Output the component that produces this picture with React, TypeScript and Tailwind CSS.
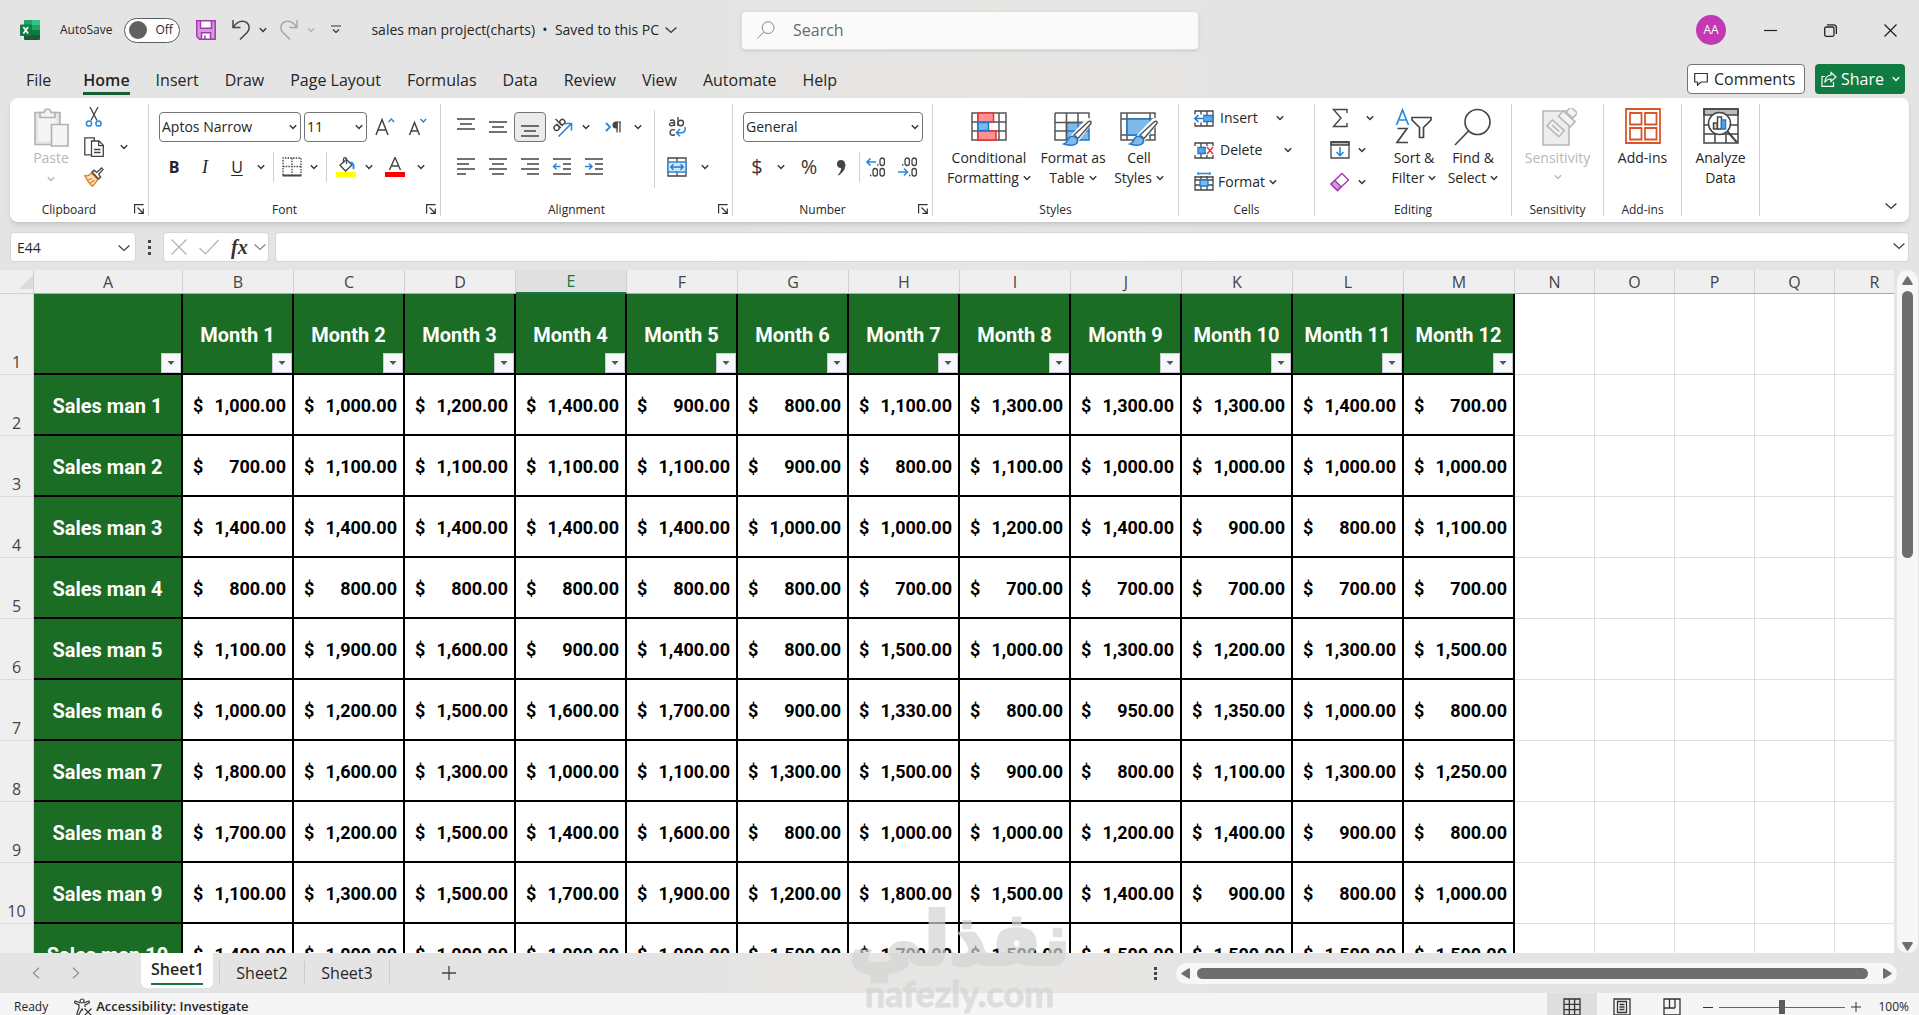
import type { ReactNode } from 'react';
import clsx from 'clsx';

const TABS = [
  'File',
  'Home',
  'Insert',
  'Draw',
  'Page Layout',
  'Formulas',
  'Data',
  'Review',
  'View',
  'Automate',
  'Help',
];

const MONTHS = Array.from({ length: 12 }, (_, i) => `Month ${i + 1}`);
const MONTH_LETTERS = 'BCDEFGHIJKLM'.split('');
const EMPTY_LETTERS = 'NOPQR'.split('');

const SALES = [
  [1000, 1000, 1200, 1400, 900, 800, 1100, 1300, 1300, 1300, 1400, 700],
  [700, 1100, 1100, 1100, 1100, 900, 800, 1100, 1000, 1000, 1000, 1000],
  [1400, 1400, 1400, 1400, 1400, 1000, 1000, 1200, 1400, 900, 800, 1100],
  [800, 800, 800, 800, 800, 800, 700, 700, 700, 700, 700, 700],
  [1100, 1900, 1600, 900, 1400, 800, 1500, 1000, 1300, 1200, 1300, 1500],
  [1000, 1200, 1500, 1600, 1700, 900, 1330, 800, 950, 1350, 1000, 800],
  [1800, 1600, 1300, 1000, 1100, 1300, 1500, 900, 800, 1100, 1300, 1250],
  [1700, 1200, 1500, 1400, 1600, 800, 1000, 1000, 1200, 1400, 900, 800],
  [1100, 1300, 1500, 1700, 1900, 1200, 1800, 1500, 1400, 900, 800, 1000],
  [1400, 1000, 1000, 1000, 1000, 1500, 1700, 1500, 1500, 1500, 1500, 1500],
];

const money = (value: number) =>
  value.toLocaleString('en-US', { minimumFractionDigits: 2 });

type IconProps = { className?: string };

function Chevron({ className = 'text-[#333]' }: IconProps) {
  return (
    <svg
      viewBox="0 0 8 6"
      className={clsx('h-1.5 w-2 shrink-0', className)}
      fill="none"
      stroke="currentColor"
      strokeWidth="1.4"
    >
      <path d="M.8 1.2 4 4.4l3.2-3.2" />
    </svg>
  );
}

function WideChevron({ className = 'text-[#333]' }: IconProps) {
  return (
    <svg
      viewBox="0 0 12 8"
      className={clsx('h-2 w-3 shrink-0', className)}
      fill="none"
      stroke="currentColor"
      strokeWidth="1.3"
    >
      <path d="m.6 1.4 5.4 5 5.4-5" />
    </svg>
  );
}

function ExcelIcon() {
  return (
    <svg viewBox="0 0 20 20" className="size-5">
      <path d="M5 0h8v5H4V1a1 1 0 0 1 1-1Z" fill="#21a366" />
      <path d="M12 0h7a1 1 0 0 1 1 1v4h-8Z" fill="#33c481" />
      <path d="M4 5h8v5H4Z" fill="#107c41" />
      <path d="M12 5h8v5h-8Z" fill="#21a366" />
      <path d="M4 10h8v10H5a1 1 0 0 1-1-1Z" fill="#185c37" />
      <path d="M12 10h8v5h-8Z" fill="#107c41" />
      <path d="M12 15h8v4a1 1 0 0 1-1 1h-7Z" fill="#185c37" />
      <rect y="4.500" width="11.500" height="11.500" rx="1" fill="#107c41" />
      <path d="m3.400 7 4.700 6.600M8.100 7l-4.700 6.600" stroke="#fff" strokeWidth="1.700" />
    </svg>
  );
}

function SaveIcon() {
  return (
    <svg viewBox="0 0 20 20" className="size-5" stroke="#a33bac" strokeWidth="1.500">
      <path d="M.8.8h18.400v18.400H3.500L.8 16.500Z" fill="#d49bdc" />
      <path d="M4.500.8h11v7.400h-11Z" fill="#fff" />
      <path d="M5.500 19.200v-6.400h9v6.400Z" fill="#fff" />
      <path d="M9 19v-3.500" />
    </svg>
  );
}

function UndoIcon({ className }: IconProps) {
  return (
    <svg
      viewBox="0 0 20 22"
      className={clsx('h-[22px] w-5', className)}
      fill="none"
      stroke="currentColor"
      strokeWidth="1.500"
    >
      <path d="M2 1v7.500h7.500M2 8.500C5 4 8 2 11.500 2.200c6.500.4 8.500 6.800 4.600 11.300L9 20.500" />
    </svg>
  );
}

function PasteIcon() {
  return (
    <svg viewBox="0 0 36 40" className="h-10 w-9" stroke="#b3b3b3" strokeWidth="1.700">
      <path d="M2 4.500h25v32H2Z" fill="#e6e6e6" />
      <path d="M5.500 8h18v25.500h-18Z" fill="#f5f5f5" stroke="none" />
      <path d="M7 9.500V4.500h4C11.500 2 13 1 14.500 1S17.500 2 18 4.500h4v5Z" fill="#f3f3f3" />
      <path d="M18.500 16.500H35v21.500H18.500Z" fill="#f5f5f5" />
    </svg>
  );
}

function CutIcon() {
  return (
    <svg viewBox="0 0 20 20" className="size-5" fill="none" strokeWidth="1.300">
      <path d="m6 0 7 13.500M14 0 7 13.500" stroke="#444" />
      <circle cx="5" cy="16.500" r="2.600" stroke="#2b88d8" strokeWidth="1.500" />
      <circle cx="14.500" cy="16.500" r="2.600" stroke="#2b88d8" strokeWidth="1.500" />
    </svg>
  );
}

function CopyIcon() {
  return (
    <svg viewBox="0 0 20 20" className="size-5" fill="#fff" stroke="#444" strokeWidth="1.300">
      <path d="M.8.8h9.500v17H.8Z" />
      <path d="M7.500 4h7.500l4.300 4.300v11H7.500Z" />
      <path d="M14.700 4v4.600h4.500M10 12.500h6.500M10 15.500h6.500" fill="none" />
    </svg>
  );
}

function PainterIcon() {
  return (
    <svg viewBox="0 0 20 20" className="size-5" strokeWidth="1.300">
      <path d="M.8 8.500c3.500 1 5-.2 6.500-2.500l6.500 6.500c-1.500 2-2.800 4-5.300 6.700C5.500 17.500 3 13 .8 8.500Z" fill="#fbe3c6" stroke="#e07a10" />
      <path d="m4 13 4-1.500M6 16.500l4.500-3.500" stroke="#e07a10" />
      <path d="m8 5 2-1.800 2.800 2.300L17.500 1 19 2.500l-4.300 4.800 2 2.700-2.200 2Z" fill="#fff" stroke="#444" />
    </svg>
  );
}

function BordersIcon() {
  return (
    <svg viewBox="0 0 20 20" className="size-5" fill="none" stroke="#444" strokeWidth="1.300">
      <path d="M1 18V1h18v17M10 1v17M1 9.500h18" strokeDasharray="1.500 1.200" />
      <path d="M.5 18.500h19" strokeWidth="2" />
    </svg>
  );
}

function FillIcon() {
  return (
    <svg viewBox="0 0 20 20" className="size-5" fill="none" strokeWidth="1.300">
      <path d="M9.500 1.500 16 8l-6.500 6L4 8.300l5.500-5" stroke="#444" fill="#fff" />
      <path d="M7.500 6V2.200c0-2 3-2 3 0V7" stroke="#444" />
      <path d="M14 5.500c3.200 0 4 2.500 3.400 6.500" stroke="#2b88d8" strokeWidth="2" />
      <path d="M0 15h20v5H0Z" fill="#ff0" />
    </svg>
  );
}

function FontColorIcon() {
  return (
    <svg viewBox="0 0 20 20" className="size-5" fill="none">
      <path d="M4.500 13 10 .5 15.500 13M6.300 9h7.400" stroke="#444" strokeWidth="1.400" />
      <path d="M0 15h20v5H0Z" fill="#f00" />
    </svg>
  );
}

function FontSizeIcon({ grow }: { grow?: boolean }) {
  return (
    <svg viewBox="0 0 20 20" className="size-5" fill="none" strokeWidth="1.500">
      <path
        d={grow ? 'M1 18 7 2.500 13 18M3 13h8' : 'M1.500 18 6.500 5.500 11.500 18M3.300 14h6.400'}
        stroke="#444"
      />
      <path d={grow ? 'm13.500 5 2.800-3 2.800 3' : 'm12.500 2 2.800 3 2.800-3'} stroke="#2b88d8" />
    </svg>
  );
}

const LINE_ICONS = {
  top: 'M1 2h18M4 7h12M1 12h18',
  middle: 'M1 5h18M4 10h12M1 15h18',
  bottom: 'M1 9h18M4 14h12M1 19h18',
  left: 'M1 2h18M1 7h12M1 12h18M1 17h9',
  center: 'M1 2h18M4 7h12M1 12h18M4 17h12',
  right: 'M1 2h18M7 7h12M1 12h18M7 17h12',
};

function LinesIcon({ kind }: { kind: keyof typeof LINE_ICONS }) {
  return (
    <svg viewBox="0 0 20 20" className="size-5" stroke="#444" strokeWidth="1.500">
      <path d={LINE_ICONS[kind]} />
    </svg>
  );
}

function IndentIcon({ more }: { more?: boolean }) {
  return (
    <svg viewBox="0 0 20 20" className="size-5" fill="none" strokeWidth="1.500">
      <path d="M1 2h18M11 7h8M11 12h8M1 17h18" stroke="#444" />
      <path d={more ? 'M1 9.500h7M5 6.500l3 3-3 3' : 'M8.500 9.500h-7M4.500 6.500l-3 3 3 3'} stroke="#2b88d8" />
    </svg>
  );
}

function OrientationIcon() {
  return (
    <svg viewBox="0 0 22 22" className="size-[22px]" fill="none" strokeWidth="1.400">
      <g stroke="#444" transform="rotate(-45 7 9)">
        <circle cx="4" cy="10" r="2.600" />
        <path d="M6.800 7v6.200M9.500 3v10" />
        <circle cx="12.200" cy="10" r="2.600" />
      </g>
      <path d="M7.500 20.500 20 8M13.500 7.500h7v7" stroke="#2b88d8" strokeWidth="1.600" />
    </svg>
  );
}

function ParagraphIcon() {
  return (
    <svg viewBox="0 0 20 20" className="size-5" fill="none">
      <path d="m2 6 4 4-4 4" stroke="#2b88d8" strokeWidth="1.800" />
      <path d="M17 5h-5a2.800 2.800 0 0 0 0 6h1V5" fill="#444" stroke="#444" strokeWidth="1.200" />
      <path d="M13 5v10.500M16 5v10.500" stroke="#444" strokeWidth="1.300" />
    </svg>
  );
}

function WrapIcon() {
  return (
    <svg viewBox="0 0 20 20" className="size-5" fill="none" strokeWidth="1.400">
      <g stroke="#444">
        <path d="M3 3.600c1.500-1 4.500-1 4.500 1.300V9M7.500 5.500C4 5.500 2.500 6 2.500 7.300 2.500 9.500 6.500 9 7.500 7" />
        <path d="M11 0v9" />
        <circle cx="13.800" cy="6" r="2.700" />
        <path d="M8 13.200c-2-1.200-5-.5-5 2.300s3 3.300 5 2.200" />
      </g>
      <path d="M18 10c.8 3.500-.5 5.800-4 5.800h-4M13 12l-3.500 3.800L13 19.300" stroke="#2b88d8" strokeWidth="1.600" />
    </svg>
  );
}

function MergeIcon() {
  return (
    <svg viewBox="0 0 20 20" className="size-5" strokeWidth="1.300" fill="none">
      <path d="M1 1h18v18H1ZM10 1v4M10 15v4" stroke="#444" />
      <path d="M1 5h18v10H1Z" fill="#cfe6f8" stroke="#2b88d8" />
      <path d="M4 10h12M6.500 7.200 3.700 10l2.800 2.800M13.500 7.200l2.800 2.800-2.800 2.800" stroke="#1f78c8" />
    </svg>
  );
}

function DecimalIcon({ fewer }: { fewer?: boolean }) {
  return (
    <svg viewBox="0 0 20 20" className="size-5" fill="none" strokeWidth="1.300">
      {fewer ? (
        <>
          <path d="M0 15h9M6 11.500 9.500 15 6 18.500" stroke="#2b88d8" strokeWidth="1.600" />
          <rect x="7" y="1" width="4.400" height="7.500" rx="2.200" stroke="#444" />
          <rect x="14" y="1" width="4.400" height="7.500" rx="2.200" stroke="#444" />
          <rect x="14" y="11.500" width="4.400" height="7.500" rx="2.200" stroke="#444" />
          <path d="M4 8h1.400M11 18.500h1.400" stroke="#444" />
        </>
      ) : (
        <>
          <path d="M10 5H1M4.500 1.500 1 5l3.500 3.500" stroke="#2b88d8" strokeWidth="1.600" />
          <rect x="14" y="1" width="4.400" height="7.500" rx="2.200" stroke="#444" />
          <rect x="7" y="11.500" width="4.400" height="7.500" rx="2.200" stroke="#444" />
          <rect x="14" y="11.500" width="4.400" height="7.500" rx="2.200" stroke="#444" />
          <path d="M11 8h1.400M4 18.500h1.400" stroke="#444" />
        </>
      )}
    </svg>
  );
}

function ConditionalIcon() {
  return (
    <svg viewBox="0 0 36 36" className="size-9" fill="none" strokeWidth="1.500">
      <path d="M1 5h34v27H1ZM1 14h34M1 23h34M7 5v27M28 5v27" stroke="#555" />
      <path d="M7 5h15.500v9H7ZM7 23h18v9H7Z" fill="#ff8f95" stroke="#e8302f" />
      <path d="M7 14.500h10.500v8H7Z" fill="#7fb8ea" stroke="#1f78c8" />
    </svg>
  );
}

function Brush() {
  return (
    <>
      <path d="M17 30 33 13c2-2 4.500-.5 3 2L22 33Z" fill="#fff" stroke="#fff" strokeWidth="4" />
      <path d="M20 27 34 14c2-1.800 4-.3 2.500 2L24 30.500Z" fill="#fff" stroke="#555" strokeWidth="1.500" />
      <path d="M10 36c3-1 3-3 4.500-5.500 2.500-3.500 8-2.500 9 1.500.8 4-4 7-13.500 4Z" fill="#7fb8ea" stroke="#1f78c8" strokeWidth="1.500" />
    </>
  );
}

function FormatTableIcon() {
  return (
    <svg viewBox="0 0 38 38" className="size-[38px]" fill="none" strokeWidth="1.500">
      <path d="M12.500 14.500H35V32H12.500Z" fill="#7fb8ea" stroke="#1f78c8" />
      <path d="M1 5h34v9.500H1v17.500h11M1 5v27M12.500 5v27M24 5v9.500M1 23h11.500" stroke="#555" />
      <path d="M24 14.500v8M13 23h22" stroke="#1f78c8" />
      <Brush />
    </svg>
  );
}

function CellStylesIcon() {
  return (
    <svg viewBox="0 0 38 38" className="size-[38px]" fill="none" strokeWidth="1.500">
      <path d="M1 5h34v27H1ZM7 5v27M30 5v27M1 11h34M1 27h34" stroke="#555" />
      <path d="M7 11h23v16H7Z" fill="#7fb8ea" stroke="#1f78c8" />
      <Brush />
    </svg>
  );
}

function CellsIcon({ kind }: { kind: 'insert' | 'delete' | 'format' }) {
  return (
    <svg viewBox="0 0 20 20" className="size-5" fill="none" strokeWidth="1.300">
      <path d="M1 3h18v15H1ZM7 3v15M13 3v15M1 8h18M1 13h18" stroke="#444" />
      {kind === 'insert' && (
        <>
          <path d="M8 7.500h11v6H8Z" fill="#5ba8e8" stroke="#1f78c8" />
          <path d="M0 6.500h9v8H0Z" fill="#fff" />
          <path d="M1 10.500h9M4.500 7 1 10.500 4.500 14" stroke="#1f78c8" strokeWidth="1.600" />
        </>
      )}
      {kind === 'delete' && (
        <>
          <path d="M0 6h4v9H0Z M12 6h8v9h-8Z" fill="#fff" />
          <path d="M4 7.500h7v6H4Z" fill="#5ba8e8" stroke="#1f78c8" />
          <path d="m13 7 6 7M19 7l-6 7" stroke="#e03131" strokeWidth="1.400" />
        </>
      )}
      {kind === 'format' && (
        <>
          <path d="M0 0h20v4H0Z" fill="#fff" />
          <path d="M4 1.500h12M4 0v3M16 0v3" stroke="#2b88d8" />
          <path d="M1 5h18" stroke="#444" />
          <path d="M6 8h8v6H6Z" fill="#7fb8ea" stroke="#1f78c8" />
        </>
      )}
    </svg>
  );
}

function SortIcon() {
  return (
    <svg viewBox="0 0 38 38" className="size-[38px]" fill="none" strokeWidth="1.700">
      <path d="M1.500 17 7.500 2l6 15M3.500 12h8" stroke="#2b88d8" />
      <path d="M2.500 20.500h9.500l-10 14h11" stroke="#444" />
      <path d="M17 9.500h19v2.500l-7.500 7.500v10h-4v-10L17 12Z" stroke="#444" />
    </svg>
  );
}

function FindIcon({ className }: IconProps) {
  return (
    <svg viewBox="0 0 38 38" className={className} fill="none" stroke="currentColor" strokeWidth="1.600">
      <circle cx="23.500" cy="14" r="12.500" />
      <path d="M14.500 23 1 37" />
    </svg>
  );
}

function SensitivityIcon() {
  return (
    <svg viewBox="0 0 38 38" className="size-[38px]" stroke="#b8b8b8" strokeWidth="1.600">
      <path d="M4 3h26v34H4Z" fill="#ededed" />
      <g transform="rotate(42 20 18)" fill="#f3f3f3">
        <path d="M13 1h9v7h-9Z" transform="translate(3 -5)" />
        <path d="M13 4h16v7H13Z" />
        <path d="M13 15h16v8H13Z" transform="translate(-2 3)" />
        <path d="M14 22h10" />
      </g>
    </svg>
  );
}

function AddInsIcon() {
  return (
    <svg viewBox="0 0 36 36" className="size-9" fill="none" stroke="#d9562b" strokeWidth="1.800">
      <path d="M1 1h34v34H1ZM5 5h11.500v11.500H5ZM20 5h11.500v11.500H20ZM5 20h11.500v11.500H5ZM20 20h11.500v11.500H20Z" />
    </svg>
  );
}

function AnalyzeIcon() {
  return (
    <svg viewBox="0 0 36 36" className="size-9" fill="none" stroke="#444" strokeWidth="1.500">
      <path d="M1 1h34v6H1Z" fill="#bdbdbd" />
      <path d="M1 1h34v34H1ZM1 17h34M1 26h34M12 26v9M23 26v9" />
      <circle cx="16.500" cy="15.500" r="11" fill="#fff" />
      <path d="M24.500 23.500 34 34.500" strokeWidth="2" />
      <path d="M10.500 15h4v6h-4Z" fill="#d0d0d0" />
      <path d="M14.500 9h4v12h-4Z" fill="#fff" />
      <path d="M18.500 12h4v9h-4Z" fill="#5ba8e8" stroke="#1f78c8" />
    </svg>
  );
}

function Launcher({ label }: { label: string }) {
  return (
    <button aria-label={label} className="absolute right-1 bottom-2">
      <svg viewBox="0 0 10 10" className="size-2.5" fill="none" stroke="#333" strokeWidth="1.200">
        <path d="M.6 9.500V.6h9M3.500 3.500l5.500 5.500M9.300 4.500v4.800H4.500" />
      </svg>
    </button>
  );
}

type GroupProps = {
  label?: string;
  className: string;
  launcher?: boolean;
  children: ReactNode;
};

function Group({ label, className, launcher, children }: GroupProps) {
  return (
    <section
      aria-label={label}
      className={clsx('relative flex shrink-0 flex-col', className)}
    >
      <div className="flex flex-1">{children}</div>
      <h2
        className={clsx(
          'mb-0.5 h-5 text-center text-xs leading-5',
          launcher && 'pr-5',
        )}
      >
        {label}
      </h2>
      {launcher && <Launcher label={`${label} settings`} />}
    </section>
  );
}

function GroupLine() {
  return <div className="my-1.5 w-px shrink-0 bg-[#d1d1d1]" />;
}

type ToolProps = {
  label: string;
  className?: string;
  disabled?: boolean;
  children: ReactNode;
};

function Tool({ label, className = 'w-8', disabled, children }: ToolProps) {
  return (
    <button
      aria-label={label}
      title={label}
      disabled={disabled}
      className={clsx(
        'flex h-[30px] shrink-0 items-center justify-center rounded hover:bg-black/5',
        className,
      )}
    >
      {children}
    </button>
  );
}

function More({ label }: { label: string }) {
  return (
    <Tool label={label} className="w-4">
      <Chevron />
    </Tool>
  );
}

type BigToolProps = {
  icon: ReactNode;
  lines: string[];
  className: string;
  arrow?: boolean;
  disabled?: boolean;
};

function BigTool({ icon, lines, className, arrow, disabled }: BigToolProps) {
  return (
    <button
      disabled={disabled}
      className={clsx(
        'mt-2 flex shrink-0 flex-col items-center self-start text-sm leading-5 whitespace-nowrap',
        disabled && 'text-[#b8b8b8]',
        className,
      )}
    >
      <span className="flex h-[42px] items-start justify-center pt-0.5">{icon}</span>
      {lines.map((line, i) => (
        <span key={line} className="flex h-5 items-center gap-1">
          {line}
          {arrow && i === lines.length - 1 && i > 0 && <Chevron />}
        </span>
      ))}
      {arrow && lines.length === 1 && (
        <Chevron className="mt-1.5 text-[#b8b8b8]" />
      )}
    </button>
  );
}

type PickerProps = { label: string; value: string; className: string };

function Picker({ label, value, className }: PickerProps) {
  return (
    <div className={clsx('relative', className)}>
      <select
        aria-label={label}
        defaultValue={value}
        className="h-[30px] w-full appearance-none rounded border border-[#757575] bg-white pl-0.5 text-sm"
      >
        <option>{value}</option>
      </select>
      <Chevron className="pointer-events-none absolute top-3 right-1 text-[#333]" />
    </div>
  );
}

function TitleBar() {
  return (
    <header className="flex h-[60px] items-start">
      <div className="flex h-[60px] w-[741px] shrink-0 items-center pl-5">
        <ExcelIcon />
        <span className="ml-5 text-xs">AutoSave</span>
        <button
          role="switch"
          aria-checked="false"
          aria-label="AutoSave"
          className="ml-3 flex h-[25px] w-14 items-center gap-2 rounded-full border border-[#5c5c5c] bg-white pl-1 text-xs"
        >
          <span className="size-[18px] rounded-full bg-[#616161]" />
          Off
        </button>
        <button aria-label="Save" className="ml-4">
          <SaveIcon />
        </button>
        <button aria-label="Undo" className="ml-[15px] text-[#444]">
          <UndoIcon />
        </button>
        <button aria-label="Undo history" className="ml-2">
          <Chevron />
        </button>
        <button aria-label="Redo" disabled className="ml-3 -scale-x-100 text-[#a6a6a6]">
          <UndoIcon />
        </button>
        <button aria-label="Redo history" disabled className="ml-2">
          <Chevron className="text-[#b5b5b5]" />
        </button>
        <button aria-label="Customize toolbar" className="ml-4">
          <svg viewBox="0 0 10 10" className="size-2.5" fill="none" stroke="#333" strokeWidth="1.200">
            <path d="M0 1h10M2 4.500l3 3 3-3" />
          </svg>
        </button>
        <button className="ml-[30px] flex items-center gap-1.5 text-sm">
          sales man project(charts) &nbsp;•&nbsp; Saved to this PC
          <WideChevron />
        </button>
      </div>
      <label className="mt-[11px] flex h-[39px] w-[458px] items-center gap-[18px] rounded border border-[#e0e0e0] bg-[#fafafa] pb-0.5 pl-[15px] shadow-sm">
        <FindIcon className="size-[18px] text-[#666]" />
        <input
          placeholder="Search"
          aria-label="Search"
          className="flex-1 bg-transparent text-base outline-none placeholder:text-[#6a6a6a]"
        />
      </label>
      <div className="flex h-[60px] flex-1 items-center justify-end pr-[22px]">
        <button
          aria-label="Account"
          className="mr-[38px] size-[30px] rounded-full bg-[#c239b3] text-xs text-white"
        >
          AA
        </button>
        <button aria-label="Minimize" className="mr-[47px]">
          <svg viewBox="0 0 13 13" className="size-[13px]" stroke="#222" strokeWidth="1.200">
            <path d="M0 6.500h13" />
          </svg>
        </button>
        <button aria-label="Restore" className="mr-[47px]">
          <svg viewBox="0 0 13 13" className="size-[13px]" fill="none" stroke="#222" strokeWidth="1.300">
            <rect x=".7" y="3" width="9.300" height="9.300" rx="1.500" />
            <path d="M3 .8h6.500a3 3 0 0 1 2.900 2.900V10" />
          </svg>
        </button>
        <button aria-label="Close">
          <svg viewBox="0 0 13 13" className="size-[13px]" stroke="#222" strokeWidth="1.300">
            <path d="m.5.5 12 12M12.500.5l-12 12" />
          </svg>
        </button>
      </div>
    </header>
  );
}

function TabBar() {
  return (
    <div className="flex h-[38px] items-start pl-[26px]">
      <nav className="flex flex-1 gap-[26px] text-base">
        {TABS.map((tab) => (
          <a
            key={tab}
            href="#"
            className={clsx(
              'block h-[35px] pt-2 leading-6 whitespace-nowrap',
              tab === 'Home' && 'ml-1.5 border-b-3 border-[#185c37] font-semibold',
            )}
          >
            {tab}
          </a>
        ))}
      </nav>
      <button className="mt-1 mr-2.5 flex h-[30px] w-[118px] items-center gap-1.5 rounded border border-[#757575] bg-white pl-1.5 text-base">
        <svg viewBox="0 0 14 14" className="size-3.5 shrink-0" fill="none" stroke="#333" strokeWidth="1.200">
          <path d="M.7 1.500h12.600v8.500H7l-3.500 3.300V10H.7Z" />
        </svg>
        Comments
      </button>
      <button className="mt-1 mr-3.5 flex h-[30px] w-[90px] items-center gap-1 rounded bg-[#107c41] pl-1.5 text-base text-white">
        <svg viewBox="0 0 16 16" className="size-4 shrink-0" fill="none" stroke="#fff" strokeWidth="1.200">
          <path d="M4 5.500H1v9.800h11.500V11" />
          <path d="M10 1.500 15 6l-5 4.500V8C7 8 5 9 3.800 11.500 4 7 6.500 4.500 10 4Z" />
        </svg>
        Share
        <Chevron className="ml-1 text-white" />
      </button>
    </div>
  );
}

function Ribbon() {
  return (
    <div className="mx-2.5 flex h-[124px] shrink-0 overflow-hidden rounded-lg bg-white shadow-md">
      <Group label="Clipboard" className="w-[138px]" launcher>
        <button disabled className="mt-2.5 flex w-[62px] shrink-0 flex-col items-center self-start pl-5 text-sm leading-5 text-[#b8b8b8]">
          <PasteIcon />
          <span>Paste</span>
          <Chevron className="mt-2 text-[#b8b8b8]" />
        </button>
        <div className="mt-1 ml-1.5 flex flex-col">
          <Tool label="Cut" className="h-8 w-8">
            <CutIcon />
          </Tool>
          <div className="flex">
            <Tool label="Copy" className="h-8 w-8">
              <CopyIcon />
            </Tool>
            <Tool label="Copy options" className="h-8 w-7">
              <Chevron />
            </Tool>
          </div>
          <Tool label="Format Painter" className="h-8 w-8">
            <PainterIcon />
          </Tool>
        </div>
      </Group>
      <GroupLine />

      <Group label="Font" className="w-[291px]" launcher>
        <div className="mt-3.5 ml-2.5 flex flex-col gap-2.5">
          <div className="flex gap-[3px]">
            <Picker label="Font" value="Aptos Narrow" className="w-[142px]" />
            <Picker label="Font size" value="11" className="w-[63px]" />
            <Tool label="Increase font size" className="w-[30px]">
              <FontSizeIcon grow />
            </Tool>
            <Tool label="Decrease font size" className="w-[30px]">
              <FontSizeIcon />
            </Tool>
          </div>
          <div className="flex">
            <Tool label="Bold" className="w-[30px]">
              <b className="text-base">B</b>
            </Tool>
            <Tool label="Italic">
              <i className="font-['Liberation_Serif',serif] text-lg">I</i>
            </Tool>
            <Tool label="Underline">
              <span className="text-base underline underline-offset-2">U</span>
            </Tool>
            <More label="Underline style" />
            <div className="mx-1 w-px bg-[#d1d1d1]" />
            <Tool label="Borders" className="w-7">
              <BordersIcon />
            </Tool>
            <More label="Border style" />
            <div className="mx-1 w-px bg-[#d1d1d1]" />
            <Tool label="Fill color" className="w-[30px]">
              <FillIcon />
            </Tool>
            <More label="Pick fill color" />
            <Tool label="Font color" className="w-9">
              <FontColorIcon />
            </Tool>
            <More label="Pick font color" />
          </div>
        </div>
      </Group>
      <GroupLine />

      <Group label="Alignment" className="w-[291px]" launcher>
        <div className="mt-3.5 ml-[9px] flex flex-col gap-2.5">
          <div className="flex">
            <Tool label="Top align">
              <LinesIcon kind="top" />
            </Tool>
            <Tool label="Middle align">
              <LinesIcon kind="middle" />
            </Tool>
            <Tool label="Bottom align" className="w-8 border border-[#757575] bg-[#ebebeb]">
              <LinesIcon kind="bottom" />
            </Tool>
            <Tool label="Orientation">
              <OrientationIcon />
            </Tool>
            <More label="Orientation options" />
            <Tool label="Text direction" className="ml-1 w-8">
              <ParagraphIcon />
            </Tool>
            <More label="Text direction options" />
          </div>
          <div className="flex">
            <Tool label="Align left">
              <LinesIcon kind="left" />
            </Tool>
            <Tool label="Center">
              <LinesIcon kind="center" />
            </Tool>
            <Tool label="Align right">
              <LinesIcon kind="right" />
            </Tool>
            <Tool label="Decrease indent">
              <IndentIcon />
            </Tool>
            <Tool label="Increase indent">
              <IndentIcon more />
            </Tool>
          </div>
        </div>
        <div className="mt-3 mr-1.5 ml-2 h-[78px] w-px bg-[#d1d1d1]" />
        <div className="mt-3.5 flex flex-col gap-2.5">
          <Tool label="Wrap text">
            <WrapIcon />
          </Tool>
          <div className="flex">
            <Tool label="Merge and center">
              <MergeIcon />
            </Tool>
            <Tool label="Merge options" className="w-6">
              <Chevron />
            </Tool>
          </div>
        </div>
      </Group>
      <GroupLine />

      <Group label="Number" className="w-[199px]" launcher>
        <div className="mt-3.5 ml-2.5 flex flex-col gap-2.5">
          <Picker label="Number format" value="General" className="w-[180px]" />
          <div className="flex">
            <Tool label="Currency" className="w-7">
              <span className="text-xl text-[#333]">$</span>
            </Tool>
            <Tool label="Currency options" className="w-5">
              <Chevron />
            </Tool>
            <Tool label="Percent" className="ml-0.5 w-8">
              <span className="text-xl text-[#333]">%</span>
            </Tool>
            <Tool label="Comma style">
              <svg viewBox="0 0 20 20" className="size-5">
                <circle cx="10" cy="7" r="4" fill="#444" />
                <path d="M14 7c0 5-2 8-6.500 11C10.500 14 11 12 10 9Z" fill="#444" stroke="#444" />
              </svg>
            </Tool>
            <div className="ml-0.5 w-px bg-[#d1d1d1]" />
            <Tool label="Increase decimal">
              <DecimalIcon />
            </Tool>
            <Tool label="Decrease decimal">
              <DecimalIcon fewer />
            </Tool>
          </div>
        </div>
      </Group>
      <GroupLine />

      <Group label="Styles" className="w-[245px]">
        <BigTool icon={<ConditionalIcon />} lines={['Conditional', 'Formatting']} className="ml-2.5 w-[92px]" arrow />
        <BigTool icon={<FormatTableIcon />} lines={['Format as', 'Table']} className="w-[76px]" arrow />
        <BigTool icon={<CellStylesIcon />} lines={['Cell', 'Styles']} className="w-14" arrow />
      </Group>
      <GroupLine />

      <Group label="Cells" className="w-[135px]">
        <div className="mt-1 ml-[15px] flex flex-col text-sm">
          <button className="flex h-8 items-center gap-1.5">
            <CellsIcon kind="insert" />
            Insert
            <Chevron className="ml-3 text-[#333]" />
          </button>
          <button className="flex h-8 items-center gap-1.5">
            <CellsIcon kind="delete" />
            Delete
            <Chevron className="ml-4 text-[#333]" />
          </button>
          <button className="flex h-8 items-center gap-1">
            <CellsIcon kind="format" />
            Format
            <Chevron />
          </button>
        </div>
      </Group>
      <GroupLine />

      <Group label="Editing" className="w-[196px]">
        <div className="mt-1 ml-[15px] flex flex-col">
          <div className="flex h-8 items-center">
            <Tool label="AutoSum" className="w-5">
              <svg viewBox="0 0 20 20" className="size-5" fill="none" stroke="#444" strokeWidth="1.400">
                <path d="M17 5V1.500H3.500L11 10l-7.500 8.500H17V15" />
              </svg>
            </Tool>
            <Tool label="AutoSum options" className="ml-2.5 w-5">
              <Chevron />
            </Tool>
          </div>
          <div className="flex h-8 items-center">
            <Tool label="Fill" className="w-5">
              <svg viewBox="0 0 20 20" className="size-5" fill="none" stroke="#444" strokeWidth="1.300">
                <path d="M1 2h18v3H1Z" fill="#bdbdbd" />
                <path d="M1 2h18v16H1Z" />
                <path d="M10 7v8.500M6.500 12l3.500 3.500 3.500-3.500" stroke="#2b88d8" strokeWidth="1.600" />
              </svg>
            </Tool>
            <Tool label="Fill options" className="ml-0.5 w-5">
              <Chevron />
            </Tool>
          </div>
          <div className="flex h-8 items-center">
            <Tool label="Clear" className="w-5">
              <svg viewBox="0 0 20 20" className="size-5" fill="#fff" stroke="#a33bac" strokeWidth="1.400">
                <path d="M12 1.500 18.500 8 7.500 18.500 1 12Z" />
                <path d="m5 8.500 6 6.200-3.500 3.800L1 12Z" fill="#d49bdc" />
              </svg>
            </Tool>
            <Tool label="Clear options" className="ml-0.5 w-5">
              <Chevron />
            </Tool>
          </div>
        </div>
        <BigTool icon={<SortIcon />} lines={['Sort &', 'Filter']} className="ml-1 w-[60px]" arrow />
        <BigTool icon={<FindIcon className="size-[38px] text-[#444]" />} lines={['Find &', 'Select']} className="w-[58px]" arrow />
      </Group>
      <GroupLine />

      <Group label="Sensitivity" className="w-[91px]">
        <BigTool icon={<SensitivityIcon />} lines={['Sensitivity']} className="w-full" arrow disabled />
      </Group>
      <GroupLine />
      <Group label="Add-ins" className="w-[77px]">
        <BigTool icon={<AddInsIcon />} lines={['Add-ins']} className="w-full" />
      </Group>
      <GroupLine />
      <Group className="w-[77px]">
        <BigTool icon={<AnalyzeIcon />} lines={['Analyze', 'Data']} className="w-full" />
      </Group>
      <GroupLine />

      <div className="flex flex-1 items-end justify-end pr-3 pb-3">
        <button aria-label="Collapse the ribbon">
          <WideChevron />
        </button>
      </div>
    </div>
  );
}

function FormulaBar() {
  return (
    <div className="flex h-12 shrink-0 items-center px-2.5 pt-0.5">
      <div className="relative w-[126px]">
        <input
          aria-label="Name box"
          defaultValue="E44"
          className="h-[30px] w-full rounded border border-[#d6d6d6] bg-white pl-1.5 text-sm"
        />
        <WideChevron className="pointer-events-none absolute top-3 right-1.5 text-[#444]" />
      </div>
      <div className="mx-3 flex flex-col gap-[3px]">
        <span className="size-[3px] bg-[#444]" />
        <span className="size-[3px] bg-[#444]" />
        <span className="size-[3px] bg-[#444]" />
      </div>
      <div className="flex h-[30px] w-[106px] items-center rounded border border-[#d6d6d6] bg-white pl-[7px]">
        <button aria-label="Cancel" disabled>
          <svg viewBox="0 0 16 16" className="size-4" stroke="#b0b0b0" strokeWidth="1.200">
            <path d="m.5.5 15 15M15.500.5l-15 15" />
          </svg>
        </button>
        <button aria-label="Enter" disabled className="ml-3">
          <svg viewBox="0 0 20 16" className="h-4 w-5" fill="none" stroke="#b0b0b0" strokeWidth="1.200">
            <path d="m.5 9 6 6L19.500 1" />
          </svg>
        </button>
        <button
          aria-label="Insert function"
          className="ml-3 pr-1.5 font-['Liberation_Serif',serif] text-xl leading-5 font-bold text-[#333] italic"
        >
          fx
        </button>
        <WideChevron className="text-[#888]" />
      </div>
      <div className="relative ml-1.5 flex-1">
        <input
          aria-label="Formula bar"
          className="h-[30px] w-full rounded border border-[#d6d6d6] bg-white px-2 text-sm"
        />
        <WideChevron className="pointer-events-none absolute top-2.5 right-1 text-[#444]" />
      </div>
    </div>
  );
}

function FilterButton({ label }: { label: string }) {
  return (
    <button
      aria-label={label}
      className="absolute right-0 bottom-0 flex size-5 items-center justify-center border border-[#c8cdd6] bg-[#f7f8fb]"
    >
      <svg viewBox="0 0 8 4" className="h-1 w-2" fill="#555">
        <path d="M.5 0h7L4 4Z" />
      </svg>
    </button>
  );
}

function RowNumber({ value }: { value: number }) {
  return (
    <th
      scope="row"
      className="border-r border-b border-r-[#cfcfcf] border-b-[#dcdcdc] bg-[#efefef] pb-0.5 text-center align-bottom text-base leading-5 font-normal text-[#444]"
    >
      {value}
    </th>
  );
}

function EmptyCells() {
  return EMPTY_LETTERS.map((letter) => (
    <td key={letter} className="border-r border-b border-[#dedede] bg-white" />
  ));
}

function Sheet() {
  return (
    <div className="flex-1 overflow-hidden">
      <table className="w-full min-w-[1915px] table-fixed border-separate border-spacing-0">
        <colgroup>
          <col className="w-[34px]" />
          <col className="w-[149px]" />
          {MONTH_LETTERS.map((letter) => (
            <col key={letter} className="w-[111px]" />
          ))}
          {EMPTY_LETTERS.map((letter) => (
            <col key={letter} className="w-20" />
          ))}
        </colgroup>
        <thead>
          <tr className="h-6 bg-[#efefef] text-base leading-5 text-[#444]">
            <th className="border-r border-b border-[#cfcfcf] p-0">
              <svg viewBox="0 0 14 14" className="ml-auto size-3.5" fill="#dcdcdc">
                <path d="M14 0v14H0Z" />
              </svg>
            </th>
            {['A', ...MONTH_LETTERS, ...EMPTY_LETTERS].map((letter) => (
              <th
                key={letter}
                scope="col"
                className={clsx(
                  'border-r border-r-[#d0d0d0] p-0 font-normal',
                  letter === 'E'
                    ? 'border-b-2 border-b-[#1a7343] bg-[#e0e0e0] text-[#1a7343]'
                    : 'border-b border-b-[#a8a8a8]',
                )}
              >
                {letter}
              </th>
            ))}
          </tr>
        </thead>
        <tbody>
          <tr className="h-[81px]">
            <RowNumber value={1} />
            {['', ...MONTHS].map((month) => (
              <td
                key={month}
                className="relative border-r-2 border-b-2 border-black bg-[#1b6c24] px-0 pt-0.5 pb-0 text-center font-['Roboto',sans-serif] text-xl font-bold text-white"
              >
                {month}
                <FilterButton label={`Filter ${month}`} />
              </td>
            ))}
            <EmptyCells />
          </tr>
          {SALES.map((row, i) => (
            <tr key={i} className="h-[61px]">
              <RowNumber value={i + 2} />
              <td className="border-r-2 border-b-2 border-black bg-[#1b6c24] px-0 pt-0.5 pb-0 text-center font-['Roboto',sans-serif] text-xl font-bold text-white">
                Sales man {i + 1}
              </td>
              {row.map((value, j) => (
                <td
                  key={j}
                  className="border-r-2 border-b-2 border-black bg-white pt-0.5 pr-1.5 pb-0 pl-2.5 font-['Roboto',sans-serif] text-lg font-bold text-black"
                >
                  <div className="flex justify-between">
                    <span>$</span>
                    <span>{money(value)}</span>
                  </div>
                </td>
              ))}
              <EmptyCells />
            </tr>
          ))}
        </tbody>
      </table>
    </div>
  );
}

function Triangle({ className }: IconProps) {
  return (
    <svg viewBox="0 0 11 9" className={clsx('h-[9px] w-[11px] shrink-0', className)} fill="#6e6e6e">
      <path d="M4.700.8a1 1 0 0 1 1.600 0l4.300 6.700c.4.700 0 1.500-.8 1.500H1.200C.4 9 0 8.200.4 7.500Z" />
    </svg>
  );
}

function VerticalScroll() {
  return (
    <div className="mr-px ml-[3px] flex w-[21px] shrink-0 flex-col items-center rounded-full bg-[#f7f7f7] pt-1.5">
      <button aria-label="Scroll up">
        <Triangle />
      </button>
      <div className="w-[11px] flex-1 pt-1.5">
        <div className="h-[41%] rounded-full bg-[#6e6e6e]" />
      </div>
      <button aria-label="Scroll down" className="mb-0.5">
        <Triangle className="rotate-180" />
      </button>
    </div>
  );
}

function SheetTabs() {
  return (
    <div className="flex h-10 shrink-0 items-center text-base">
      <button aria-label="Previous sheet" className="ml-8">
        <svg viewBox="0 0 8 12" className="h-3 w-2" fill="none" stroke="#999" strokeWidth="1.500">
          <path d="M7 .8 1.500 6 7 11.200" />
        </svg>
      </button>
      <button aria-label="Next sheet" className="ml-8">
        <svg viewBox="0 0 8 12" className="h-3 w-2" fill="none" stroke="#999" strokeWidth="1.500">
          <path d="M1 .8 6.500 6 1 11.200" />
        </svg>
      </button>
      <button className="ml-[61px] h-[35px] w-[72px] self-start rounded-b-md bg-white px-2.5 font-semibold">
        <span className="block border-b-2 border-[#1a7343] pb-0.5 leading-6">Sheet1</span>
      </button>
      <button className="ml-1.5 h-6 w-[86px] border-x border-[#cccccc] leading-6">Sheet2</button>
      <button className="h-6 w-[85px] border-r border-[#cccccc] leading-6">Sheet3</button>
      <button aria-label="New sheet" className="ml-[52px]">
        <svg viewBox="0 0 14 14" className="size-3.5" stroke="#444" strokeWidth="1.300">
          <path d="M7 0v14M0 7h14" />
        </svg>
      </button>
      <div className="ml-auto flex flex-col gap-0.5">
        <span className="size-[3px] bg-[#444]" />
        <span className="size-[3px] bg-[#444]" />
        <span className="size-[3px] bg-[#444]" />
      </div>
      <div className="mr-[22px] ml-[19px] flex h-[21px] w-[721px] items-center rounded-full bg-[#f7f7f7] px-1">
        <button aria-label="Scroll left">
          <Triangle className="-rotate-90" />
        </button>
        <div className="mx-1.5 h-[11px] flex-1 pr-2">
          <div className="h-full rounded-full bg-[#6e6e6e]" />
        </div>
        <button aria-label="Scroll right">
          <Triangle className="rotate-90" />
        </button>
      </div>
    </div>
  );
}

function StatusBar() {
  return (
    <footer className="h-[22px] shrink-0 overflow-hidden bg-[#f5f5f5]">
      <div className="flex h-7 items-center text-xs">
        <span className="ml-3.5">Ready</span>
        <button className="ml-[26px] flex items-center gap-1 text-[13px] font-semibold">
          <svg viewBox="0 0 18 18" className="size-[18px]" fill="none" stroke="#333" strokeWidth="1.200">
            <circle cx="8" cy="3" r="2" />
            <path d="M6 5 2 3.300c-1.500-.4-2 1.400-.6 2L5 7v3l-2 5.500c-.3 1.500 1.400 2 2 .8L8 11l1 1.500M10 5l4-1.700c1.500-.4 2 1.400.6 2L11 7v2" />
            <path d="m10.500 10.500 7 7M17.500 10.500l-7 7" />
          </svg>
          Accessibility: Investigate
        </button>
        <div className="ml-auto flex h-full items-center">
          <button aria-label="Normal view" className="flex h-full w-[50px] items-center justify-center bg-[#dedede]">
            <svg viewBox="0 0 18 18" className="size-[18px]" fill="none" stroke="#333" strokeWidth="1.300">
              <path d="M1 1h16v16H1ZM6.300 1v16M11.600 1v16M1 6.300h16M1 11.600h16" />
            </svg>
          </button>
          <button aria-label="Page layout view" className="flex h-full w-[50px] items-center justify-center">
            <svg viewBox="0 0 18 18" className="size-[18px]" fill="none" stroke="#333" strokeWidth="1.300">
              <path d="M1 1h16v16H1ZM4.500 3.500h9v11h-9ZM6.500 6.500h5M6.500 9h5M6.500 11.500h5" />
            </svg>
          </button>
          <button aria-label="Page break view" className="flex h-full w-[50px] items-center justify-center">
            <svg viewBox="0 0 18 18" className="size-[18px]" fill="none" stroke="#333" strokeWidth="1.300">
              <path d="M1 1h16v16H1ZM6.500 1v9M12 1v9M1 10h11" />
            </svg>
          </button>
          <button aria-label="Zoom out" className="ml-1.5 h-px w-2.5 bg-[#333]" />
          <input
            type="range"
            aria-label="Zoom"
            defaultValue={50}
            className="mx-1.5 h-3.5 w-[126px] appearance-none bg-transparent [&::-webkit-slider-runnable-track]:h-px [&::-webkit-slider-runnable-track]:bg-[#666] [&::-webkit-slider-thumb]:-mt-[7px] [&::-webkit-slider-thumb]:h-3.5 [&::-webkit-slider-thumb]:w-1.5 [&::-webkit-slider-thumb]:appearance-none [&::-webkit-slider-thumb]:bg-[#5c5c5c]"
          />
          <button aria-label="Zoom in">
            <svg viewBox="0 0 10 10" className="size-2.5" stroke="#333">
              <path d="M5 0v10M0 5h10" />
            </svg>
          </button>
          <button className="mr-2.5 ml-4 w-8 text-right">100%</button>
        </div>
      </div>
    </footer>
  );
}

export default function App() {
  return (
    <div className="relative flex h-screen flex-col overflow-hidden bg-linear-to-r from-[#e4e4e4] from-35% via-[#e8e6e3] via-52% to-[#e4e4e4] to-65% font-['Open_Sans',sans-serif] text-[#262626]">
      <TitleBar />
      <TabBar />
      <Ribbon />
      <FormulaBar />
      <main className="flex min-h-0 flex-1">
        <Sheet />
        <VerticalScroll />
      </main>
      <SheetTabs />
      <StatusBar />
      <div className="pointer-events-none absolute bottom-1 left-1/2 -translate-x-1/2 text-center font-bold text-[#d4d4d4] opacity-70">
        <p
          dir="rtl"
          className="font-['DejaVu_Sans',sans-serif] text-7xl leading-18 [-webkit-text-stroke:4px_currentColor]"
        >
          نفذلي
        </p>
        <p className="font-['Lato',sans-serif] text-4xl leading-9 [-webkit-text-stroke:1px_currentColor]">
          nafezly.com
        </p>
      </div>
    </div>
  );
}
